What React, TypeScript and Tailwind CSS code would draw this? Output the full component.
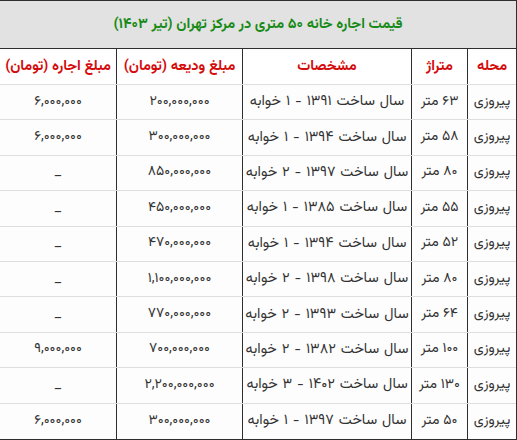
import React from "react";

const rows = [
  ["پیروزی", "۶۳ متر", "سال ساخت ۱۳۹۱ - ۱ خوابه", "۲۰۰,۰۰۰,۰۰۰", "۶,۰۰۰,۰۰۰"],
  ["پیروزی", "۵۸ متر", "سال ساخت ۱۳۹۴ - ۱ خوابه", "۳۰۰,۰۰۰,۰۰۰", "۶,۰۰۰,۰۰۰"],
  ["پیروزی", "۸۰ متر", "سال ساخت ۱۳۹۷ - ۲ خوابه", "۸۵۰,۰۰۰,۰۰۰", "_"],
  ["پیروزی", "۵۵ متر", "سال ساخت ۱۳۸۵ - ۱ خوابه", "۴۵۰,۰۰۰,۰۰۰", "_"],
  ["پیروزی", "۵۲ متر", "سال ساخت ۱۳۹۴ - ۱ خوابه", "۴۷۰,۰۰۰,۰۰۰", "_"],
  ["پیروزی", "۸۰ متر", "سال ساخت ۱۳۹۸ - ۲ خوابه", "۱,۱۰۰,۰۰۰,۰۰۰", "_"],
  ["پیروزی", "۶۴ متر", "سال ساخت ۱۳۹۳ - ۲ خوابه", "۷۷۰,۰۰۰,۰۰۰", "_"],
  ["پیروزی", "۱۰۰ متر", "سال ساخت ۱۳۸۲ - ۲ خوابه", "۷۰۰,۰۰۰,۰۰۰", "۹,۰۰۰,۰۰۰"],
  ["پیروزی", "۱۳۰ متر", "سال ساخت ۱۴۰۲ - ۳ خوابه", "۲,۲۰۰,۰۰۰,۰۰۰", "_"],
  ["پیروزی", "۵۰ متر", "سال ساخت ۱۳۹۷ - ۱ خوابه", "۳۰۰,۰۰۰,۰۰۰", "۶,۰۰۰,۰۰۰"],
];

const headers = ["محله", "متراژ", "مشخصات", "مبلغ ودیعه (تومان)", "مبلغ اجاره (تومان)"];
const borders = ["border-l", "border-l", "border-l", "border-l", ""];
const sizes = ["text-[14px]", "text-[14px]", "text-[14.5px] [word-spacing:1px]", "text-[14px]", "text-[14px]"];

export default function App() {
  return (
    <div
      className="w-[517px] h-[440px] bg-white overflow-hidden"
      style={{ fontFamily: '"Vazirmatn", "Noto Sans Arabic", "Noto Naskh Arabic", "Noto Kufi Arabic", "DejaVu Sans", sans-serif' }}
    >
      <div dir="rtl" className="border-t border-r border-b border-[#2e2e2e] w-[517px]">
        <div className="h-[48px] bg-[#e2e2e2] border-b border-[#2e2e2e] flex items-center justify-center text-[14.5px] font-bold text-[#178a17]">
          قیمت اجاره خانه ۵۰ متری در مرکز تهران (تیر ۱۴۰۳)
        </div>
        <div className="grid grid-cols-[49px_56px_169px_126px_116px] h-[36px] border-b border-[#dedede]">
          {headers.map((h, i) => (
            <div
              key={i}
              className={`${borders[i]} border-[#2e2e2e] flex items-center justify-center text-[14.5px] font-bold text-[#d40b0b] whitespace-nowrap`}
            >
              {h}
            </div>
          ))}
        </div>
        {rows.map((r, ri) => (
          <div
            key={ri}
            className={`grid grid-cols-[49px_56px_169px_126px_116px] h-[35.4px] ${ri < rows.length - 1 ? "border-b border-[#dedede]" : ""} bg-[#fdfdfd]`}
          >
            {r.map((c, i) => (
              <div
                key={i}
                className={`${borders[i]} ${sizes[i]} border-[#2e2e2e] flex items-center justify-center text-[#333] whitespace-nowrap`}
              >
                {c}
              </div>
            ))}
          </div>
        ))}
      </div>
    </div>
  );
}
